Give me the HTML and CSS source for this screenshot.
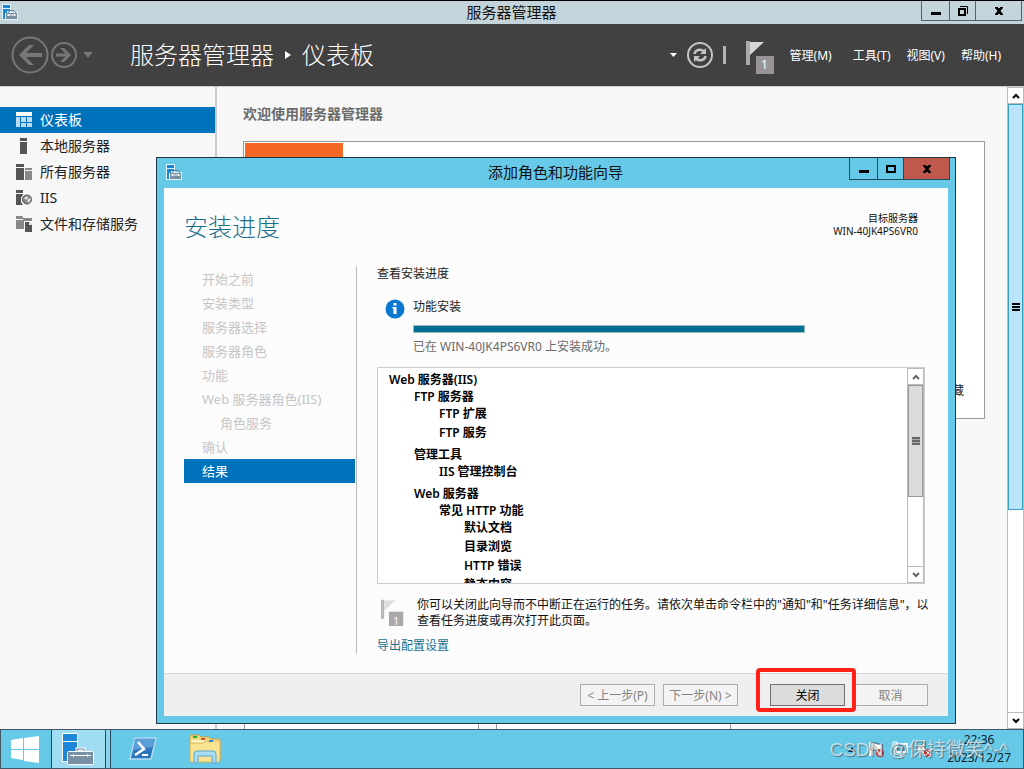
FILE: index.html
```html
<!DOCTYPE html>
<html lang="zh-CN">
<head>
<meta charset="utf-8">
<title>服务器管理器</title>
<link rel="stylesheet" href="styles.css">
</head>
<body>
<svg class="defs" width="0" height="0" aria-hidden="true">
  <symbol id="app-icon" viewBox="0 0 16 16">
    <path d="M0 0h9v8h7v8H0z" fill="#e4f2fa"/>
    <path d="M1 1h7v3H1zM1 5h7v2H5v2H3v6H1z" fill="#1c86d1"/>
    <path d="M6 9l2-2.500h4L14 9" fill="none" stroke="#6f8499"/>
    <path d="M4 9h11v6H4z" fill="#7890a5"/>
    <path d="M5 11h9M6.500 10v2M12.500 10v2" stroke="#fff"/>
  </symbol>
  <symbol id="min" viewBox="0 0 12 12"><path d="M1 7h10v3H1z"/></symbol>
  <symbol id="close" viewBox="0 0 12 12"><path d="M2 2h3v1h2V2h3v1L7.500 6 10 9v1H7V9H5v1H2V9l2.500-3L2 3z"/></symbol>
  <symbol id="up" viewBox="0 0 10 10"><path d="M2 7l3-3 3 3" fill="none" stroke="currentColor" stroke-width="2"/></symbol>
  <symbol id="down" viewBox="0 0 10 10"><path d="M2 3l3 3 3-3" fill="none" stroke="currentColor" stroke-width="2"/></symbol>
  <symbol id="flag" viewBox="0 0 29 34"><path d="M0 1h4v24H0z" fill="#a9a9a9"/><path d="M4 2h14L4 15z" fill="#d6d6d6"/><path d="M10 16h18v18H10z" fill="#979397"/></symbol>
</svg>
<div class="desktop">
  <header class="titlebar">
    <svg class="app-icon" width="16" height="16"><use href="#app-icon"/></svg>
    <h1 class="titlebar-text">服务器管理器</h1>
    <div class="winbtns">
      <button class="winbtn" aria-label="最小化"><svg width="12" height="12"><use href="#min"/></svg></button>
      <button class="winbtn winbtn-mid" aria-label="还原"><svg width="12" height="12" viewBox="0 0 12 12"><path d="M2 4h6v6H2z" fill="none" stroke="#000" stroke-width="2"/><path d="M3 1.500h7.500V9" fill="none" stroke="#000"/></svg></button>
      <button class="winbtn winbtn-wide" aria-label="关闭"><svg width="12" height="12"><use href="#close"/></svg></button>
    </div>
  </header>

  <nav class="toolbar">
    <button class="plain" aria-label="后退"><svg width="38" height="38" viewBox="0 0 38 38" fill="none" stroke="#777" stroke-width="2"><circle cx="19" cy="19" r="17.500"/><path d="M31 19H10" stroke-width="4"/><path d="M18 9L8 19l10 10h5L13 19 23 9z" fill="#777" stroke="none"/></svg></button>
    <button class="plain fwd" aria-label="前进"><svg width="26" height="26" viewBox="0 0 26 26" fill="none" stroke="#777" stroke-width="2"><circle cx="13" cy="13" r="12"/><path d="M5 13h13" stroke-width="3"/><path d="M13 6l7 7-7 7h-4l7-7-7-7z" fill="#777" stroke="none"/></svg></button>
    <button class="plain hist" aria-label="历史记录"><svg width="10" height="6" viewBox="0 0 10 6"><path d="M0 0h10L5 6z" fill="#777"/></svg></button>
    <div class="crumbs"><span>服务器管理器</span><svg width="6" height="8" viewBox="0 0 6 8"><path d="M0 0l6 4-6 4z" fill="#fff"/></svg><span>仪表板</span></div>
    <div class="tools">
      <svg width="7" height="4" viewBox="0 0 7 4"><path d="M0 0h7L3.500 4z" fill="#fff"/></svg>
      <button class="plain refresh" aria-label="刷新"><svg width="26" height="26" viewBox="0 0 26 26" fill="none" stroke="#c4c4c4" stroke-width="2"><circle cx="13" cy="13" r="12"/><path d="M7.500 12c.5-4 6-6 9.500-2.500M18.500 14c-.5 4-6 6-9.500 2.500" stroke-width="2.500"/><path d="M19 6v6h-6zM7 20v-6h6z" fill="#c4c4c4" stroke="none"/></svg></button>
      <span class="bar"></span>
      <button class="plain notify" aria-label="通知"><svg width="29" height="34"><use href="#flag"/></svg><span class="count">1</span></button>
      <ul class="menu"><li><button class="plain">管理(M)</button></li><li><button class="plain">工具(T)</button></li><li><button class="plain">视图(V)</button></li><li><button class="plain">帮助(H)</button></li></ul>
    </div>
  </nav>

  <div class="body">
    <aside class="side">
      <a class="side-item active" href="#"><svg width="16" height="16" viewBox="0 0 16 16"><path d="M0 0h16v4H0z" fill="#fff"/><path d="M0 5h4v10H0zM5 5h5v5H5zM11 5h5v5h-5zM5 11h5v4H5zM11 11h5v4h-5z" fill="#b9dcf2"/></svg>仪表板</a>
      <a class="side-item" href="#"><svg width="16" height="16" viewBox="0 0 16 16"><path d="M4 0h7v3H4zM4 4h7v12H4z" fill="#555"/></svg>本地服务器</a>
      <a class="side-item" href="#"><svg width="16" height="16" viewBox="0 0 16 16"><path d="M0 0h8v3H0zM0 4h8v12H0z" fill="#555"/><path d="M9 4h7v2H9zM9 7h7v9H9z" fill="#888"/></svg>所有服务器</a>
      <a class="side-item" href="#"><svg width="16" height="16" viewBox="0 0 16 16"><path d="M0 0h7v3H0zM0 4h7v1L5 8v4l2 3H0z" fill="#555"/><circle cx="11" cy="9.500" r="4.500" fill="#888" stroke="#555"/><path d="M8 8l3-2 1 2-2 2zM11 11l2-3 2 1-2 4z" fill="#ddd"/></svg>IIS</a>
      <a class="side-item" href="#"><svg width="16" height="16" viewBox="0 0 16 16"><path d="M0 0h6l1 1v1h9v3H8v8H0V4h7V3H0z" fill="#888"/><path d="M9 6h4l3 3v7H9z" fill="#555"/><path d="M13 6v3h3z" fill="#eee"/></svg>文件和存储服务</a>
    </aside>
    <main class="content">
      <h2 class="welcome">欢迎使用服务器管理器</h2>
      <section class="panel"><div class="tile"></div><button class="plain hide">隐藏</button></section>
      <div class="cards"><div class="card"></div><div class="card"></div></div>
    </main>
    <div class="scroll scroll-main">
      <button class="sbtn" aria-label="向上"><svg width="10" height="10"><use href="#up"/></svg></button>
      <div class="thumb"><span class="grip"></span></div>
      <div class="track"></div>
      <button class="sbtn" aria-label="向下"><svg width="10" height="10"><use href="#down"/></svg></button>
    </div>
  </div>

  <footer class="taskbar">
    <button class="task start" aria-label="开始"><svg width="28" height="27" viewBox="0 0 28 27"><path d="M0 4l12-2v11H0zM13 2l15-2v13H13zM0 14h12v10L0 22zM13 14h15v13l-15-2z" fill="#fff"/></svg></button>
    <button class="task running" aria-label="服务器管理器"><svg width="32" height="32" viewBox="0 0 32 32"><path d="M.5.500h15v28H.5z" fill="#1c86d8" stroke="#fff"/><path d="M0 8.500h16" stroke="#fff"/><path d="M15 19v-3h7v3" fill="none" stroke="#fff" stroke-width="3"/><path d="M15 19v-3h7v3" fill="none" stroke="#6f8499"/><rect x="5.500" y="18.500" width="26" height="13" rx="1" fill="#7890a5" stroke="#fff"/><path d="M8 22.500h21M11.500 21v3M25.500 21v3" stroke="#fff"/></svg></button>
    <button class="task ps" aria-label="PowerShell"><svg width="28" height="24" viewBox="0 0 28 24"><path d="M6 1h21l-5 21H1z" fill="#2b76bd" stroke="#b5dcf3" stroke-width="1.500"/><path d="M6 2h20l-2 8L4 13z" fill="#5b9fd6"/><path d="M9 5l6 7-9 6" fill="none" stroke="#fff" stroke-width="2.500"/><path d="M13 18h6" stroke="#fff" stroke-width="2"/></svg></button>
    <button class="task files" aria-label="文件资源管理器"><svg width="32" height="30" viewBox="0 0 32 30"><path d="M1 2q0-1 1-1h8l2 2h8l2 2h8q1 0 1 1v20H1z" fill="#f1d67d" stroke="#c9a34a"/><path d="M2 6h28v3H2z" fill="#fff4c4"/><path d="M1 9h13l2-2h15v19q0 2-2 2H3q-2 0-2-2z" fill="#f8e391" stroke="#d8b65a"/><path d="M4 2h4v2H4z" fill="#2bae2b"/><path d="M12 4h4v2h-4z" fill="#d8542b"/><path d="M20 6h4v2h-4z" fill="#2d87c9"/><path d="M5 29V20q0-3 3-3h16q3 0 3 3v9h-4v-7H9v7z" fill="#a9dcf5" stroke="#5ca6cc"/></svg></button>
    <div class="tray">
      <svg width="8" height="5" viewBox="0 0 8 5"><path d="M0 5h8L4 0z" fill="#123"/></svg>
      <svg class="tray-icon" width="16" height="16" viewBox="0 0 16 16"><path d="M2 1v14" stroke="#fff" stroke-width="2"/><path d="M3 2h5l1 1h5v7H8L7 9H3z" fill="#fff" stroke="#456"/><circle cx="12" cy="12" r="4" fill="#d62f2f"/><path d="M10 10l4 4M14 10l-4 4" stroke="#fff"/></svg>
      <svg class="tray-icon" width="16" height="16" viewBox="0 0 16 16"><path d="M4 3h11v8H4z" fill="#479bc0" stroke="#fff" stroke-width="2"/><path d="M9 11v3M6 14.500h8M1 1h4v5H1zM3 6v8" fill="none" stroke="#fff"/></svg>
      <svg class="tray-icon" width="16" height="16" viewBox="0 0 16 16"><path d="M1 5h3l5-4v13l-5-4H1z" fill="#fff" stroke="#456"/><circle cx="12" cy="12" r="4" fill="#d62f2f"/><path d="M10 10l4 4M14 10l-4 4" stroke="#fff"/></svg>
      <div class="clock"><time>22:36</time><time>2023/12/27</time></div>
    </div>
    <span class="watermark">CSDN @保持微笑^-^</span>
  </footer>

  <section class="dialog" role="dialog" aria-labelledby="dlg-title">
    <div class="dlg-bar">
      <svg class="app-icon" width="16" height="16"><use href="#app-icon"/></svg>
      <h2 class="titlebar-text" id="dlg-title">添加角色和功能向导</h2>
      <div class="winbtns">
        <button class="winbtn" aria-label="最小化"><svg width="12" height="12"><use href="#min"/></svg></button>
        <button class="winbtn winbtn-mid" aria-label="最大化"><svg width="12" height="12" viewBox="0 0 12 12"><path d="M2 3h8v6H2z" fill="none" stroke="#000" stroke-width="2"/></svg></button>
        <button class="winbtn winbtn-wide danger" aria-label="关闭"><svg width="12" height="12"><use href="#close"/></svg></button>
      </div>
    </div>
    <div class="dlg-client">
      <div class="dlg-head">
        <h3 class="dlg-h">安装进度</h3>
        <p class="target">目标服务器<br>WIN-40JK4PS6VR0</p>
      </div>
      <div class="dlg-main">
        <ol class="steps">
          <li>开始之前</li><li>安装类型</li><li>服务器选择</li><li>服务器角色</li><li>功能</li><li>Web 服务器角色(IIS)</li><li class="sub">角色服务</li><li>确认</li><li class="current">结果</li>
        </ol>
        <div class="detail">
          <p>查看安装进度</p>
          <div class="progress-row">
            <svg width="20" height="20" viewBox="0 0 20 20"><circle cx="10" cy="10" r="9.500" fill="#0a78d0"/><path d="M8.500 4h3v2.500h-3zM7.500 8h4v7h-3V9.500h-1z" fill="#fff"/></svg>
            <div class="progress-col">
              <label for="prog">功能安装</label>
              <progress id="prog" value="100" max="100"></progress>
              <p class="status">已在 WIN-40JK4PS6VR0 上安装成功。</p>
            </div>
          </div>
          <div class="results">
            <ul class="tree">
              <li>Web 服务器(IIS)
                <ul>
                  <li>FTP 服务器<ul class="leaves"><li>FTP 扩展</li><li>FTP 服务</li></ul></li>
                  <li>管理工具<ul class="leaves"><li>IIS 管理控制台</li></ul></li>
                  <li>Web 服务器<ul><li>常见 HTTP 功能<ul class="leaves"><li>默认文档</li><li>目录浏览</li><li>HTTP 错误</li><li>静态内容</li></ul></li></ul></li>
                </ul>
              </li>
            </ul>
            <div class="scroll scroll-list">
              <button class="sbtn" aria-label="向上"><svg width="10" height="10"><use href="#up"/></svg></button>
              <div class="thumb"><span class="grip"></span></div>
              <div class="track"></div>
              <button class="sbtn" aria-label="向下"><svg width="10" height="10"><use href="#down"/></svg></button>
            </div>
          </div>
          <div class="note">
            <div class="note-flag"><svg width="23" height="27"><use href="#flag"/></svg><span class="count">1</span></div>
            <p>你可以关闭此向导而不中断正在运行的任务。请依次单击命令栏中的"通知"和"任务详细信息"，以查看任务进度或再次打开此页面。</p>
          </div>
          <a class="export" href="#">导出配置设置</a>
        </div>
      </div>
      <div class="dlg-foot">
        <button class="btn" disabled>&lt; 上一步(P)</button>
        <button class="btn" disabled>下一步(N) &gt;</button>
        <div class="close-wrap"><button class="btn primary">关闭</button></div>
        <button class="btn" disabled>取消</button>
      </div>
    </div>
  </section>
</div>
</body>
</html>
```
FILE: styles.css
```css
* { box-sizing: border-box; }
body, h1, h2, h3, p, ul, ol { margin: 0; padding: 0; }
ul, ol { list-style: none; }
body, button { font-family: "Noto Sans", "Noto Sans CJK SC", sans-serif; font-size: 12px; line-height: 16px; }
svg { display: block; flex: none; }
.defs { position: absolute; }
a { text-decoration: none; }
.plain { border: 0; padding: 0; background: none; color: inherit; }

.desktop { position: relative; display: flex; flex-direction: column; height: 100vh; overflow: hidden; background: #f7f7f7; color: #222; }

.titlebar { display: flex; flex: none; height: 24px; padding: 0 2px; border-top: 1px solid #000; background: #c3d5db; }
.app-icon { margin-top: 3px; }
.titlebar-text { flex: 1; padding-left: 84px; font-size: 15px; font-weight: 400; line-height: 23px; text-align: center; color: #111; }
.winbtns { display: flex; flex: none; height: 20px; border: 1px solid #52636b; border-top: 0; }
.winbtn { display: flex; align-items: center; justify-content: center; width: 27px; border: 0; padding: 0; background: none; }
.winbtn + .winbtn { border-left: 1px solid #52636b; }
.winbtn-mid { width: 26px; }
.winbtn-wide { width: 46px; }

.toolbar { display: flex; flex: none; align-items: center; height: 62px; padding: 0 23px 0 11px; background: #414141; color: #fff; }
.fwd { margin-left: 2px; }
.hist { margin: 0 37px 0 6px; }
.crumbs { display: flex; align-items: center; gap: 11px; font-size: 24px; line-height: 32px; font-weight: 300; white-space: nowrap; }
.tools { display: flex; align-items: center; margin-left: auto; }
.refresh { margin-left: 10px; }
.bar { width: 3px; height: 18px; margin: 0 20px 0 10px; background: #b5b5b5; }
.notify { position: relative; margin-top: 4px; }
.count { position: absolute; right: 1px; bottom: 0; width: 18px; line-height: 18px; text-align: center; color: #fff; }
.menu { display: flex; gap: 16px; margin-left: 15px; padding-top: 2px; }
.menu li:nth-child(2) { margin-left: 5px; }

.body { display: flex; flex: 1; min-height: 0; border-top: 1px solid #ccc; }
.side { flex: none; width: 217px; padding-top: 20px; border-right: 2px solid #ccc; }
.side-item { display: flex; align-items: center; gap: 8px; height: 26px; padding-left: 16px; font-size: 14px; color: #222; }
.side-item.active { background: #0072bc; color: #fff; }
.content { display: flex; flex: 1; flex-direction: column; min-width: 0; padding: 17px 22px 0 26px; overflow: hidden; }
.welcome { font-size: 14px; line-height: 20px; color: #6b6b6b; }
.panel { display: flex; flex: none; align-items: flex-end; justify-content: space-between; height: 278px; margin-top: 17px; padding: 1px 20px 19px 1px; border: 1px solid #999; background: #fff; }
.tile { align-self: flex-start; width: 98px; height: 98px; background: #f56723; }
.cards { display: grid; flex: 1; grid-template-columns: 235px 235px; gap: 17px; margin-top: 60px; padding-left: 1px; }
.card { border: solid #999; border-width: 1px 1px 0; background: #fff; }

.scroll { display: flex; flex: none; flex-direction: column; width: 17px; background: #fff; border: solid #bbb; border-width: 0 1px; }
.sbtn { display: flex; flex: none; align-items: center; justify-content: center; height: 17px; border: solid #bbb; border-width: 1px 0; padding: 0; background: #fff; color: #000; }
.thumb { display: flex; align-items: center; justify-content: center; border: 1px solid #3a9fb8; background: #b9e4fb; }
.grip { width: 8px; height: 8px; background: repeating-linear-gradient(#000 0 2px, transparent 2px 3px); }
.scroll-main .thumb { flex: 406; }
.scroll-main .track { flex: 203; }
.scroll-list .sbtn { color: #666; }
.scroll-list .thumb { flex: 111; border-color: #999; background: #dcdcdc; }
.scroll-list .thumb .grip { background: repeating-linear-gradient(#666 0 2px, #aaa 2px 3px); }
.scroll-list .track { flex: 70; }

.taskbar { position: relative; display: flex; flex: none; height: 40px; border: 1px solid #456; background: #66c9e8; }
.task { display: flex; align-items: center; border: 0; padding: 0; background: none; }
.start { width: 50px; padding-left: 10px; }
.running { width: 60px; padding-left: 10px; border: solid #234a5a; border-width: 0 1px; background: linear-gradient(90deg, #a0dcf2 53px, #234a5a 53px 54px, #8ad4ee 54px); }
.ps { margin-left: 18px; }
.files { margin-left: 32px; }
.tray { display: flex; align-items: center; margin-left: auto; padding-right: 12px; }
.tray-icon { margin-left: 8px; }
.tray svg:first-child { margin-right: 4px; }
.clock { display: flex; flex-direction: column; align-items: center; margin-left: 15px; line-height: 18px; color: #123; }
.watermark { position: absolute; right: 15px; top: 7px; font-family: "Liberation Sans", "Noto Sans CJK SC", sans-serif; font-size: 19px; line-height: 26px; color: rgba(225, 235, 240, .8); text-shadow: 1px 1px 1px rgba(60, 80, 90, .7); white-space: nowrap; }

.dialog { position: absolute; top: 157px; right: 68px; bottom: 45px; left: 156px; display: flex; flex-direction: column; padding: 0 7px 7px; border: 1px solid #1d3540; background: #66c9e8; }
.dlg-bar { display: flex; flex: none; height: 30px; margin-right: -2px; padding-left: 2px; }
.dlg-bar .app-icon { margin-top: 6px; }
.dlg-bar .titlebar-text { padding-left: 80px; line-height: 29px; }
.dlg-bar .winbtns { height: 22px; border-color: #234a5a; }
.dlg-bar .winbtn + .winbtn { border-color: #234a5a; }
.danger { background: #c1584d; }
.dlg-client { display: flex; flex: 1; flex-direction: column; min-height: 0; background: #fcfcfc; }
.dlg-head { display: flex; justify-content: space-between; padding: 23px 30px 0 20px; }
.dlg-h { font-size: 24px; font-weight: 300; line-height: 32px; color: #1b6f8e; }
.target { padding-top: 1px; font-size: 10px; line-height: 13px; text-align: right; color: #111; }
.dlg-main { display: flex; flex: 1; min-height: 0; padding: 23px 20px 19px; }
.steps { flex: none; width: 173px; padding: 1px 1px 0 0; border-right: 1px solid #bbb; font-size: 13px; line-height: 24px; color: #c6c6c6; }
.steps li { padding-left: 18px; }
.steps .sub { padding-left: 36px; }
.steps .current { background: #0072bc; color: #fff; }
.detail { display: flex; flex: 1; flex-direction: column; min-width: 0; padding-left: 20px; }
.progress-row { display: flex; gap: 8px; margin-top: 17px; padding-left: 8px; }
.progress-col { display: flex; flex-direction: column; flex: 1; padding-right: 123px; }
progress { appearance: none; width: 100%; height: 8px; margin: 10px 0 6px; border: 1px solid #9bb; background: #ddd; }
progress::-webkit-progress-bar { background: #ddd; }
progress::-webkit-progress-value { background: #006f94; }
.status { color: #6b6b6b; }
.results { display: flex; flex: 1; min-height: 0; margin: 12px 3px 0 0; border: 1px solid #ccc; background: #fff; overflow: hidden; }
.tree { flex: 1; padding: 3px 0 0 11px; font-weight: 600; line-height: 17px; color: #000; }
.tree ul { padding-left: 25px; }
.tree ul > li + li { margin-top: 4px; }
.tree .leaves { line-height: 18px; }
.tree .leaves > li + li { margin-top: 1px; }
.note { display: flex; flex: none; gap: 13px; margin: 13px -10px 0 0; padding-left: 4px; color: #111; }
.note-flag { position: relative; flex: none; margin-top: 2px; opacity: .8; }
.note-flag .count { width: 14px; line-height: 15px; font-size: 10px; }
.export { margin-top: 9px; color: #1b6f8e; }
.dlg-foot { display: flex; flex: none; align-items: flex-start; gap: 8px; justify-content: flex-end; height: 43px; padding: 10px 20px 0; border-top: 1px solid #d8d8d8; background: #efefef; }
.btn { display: block; width: 75px; height: 22px; border: 1px solid #acacac; padding: 1px 0 0; background: #f3f3f3; color: #838383; white-space: nowrap; }
.btn.primary { border-color: #707070; background: #dcdcdc; color: #000; }
.close-wrap { position: relative; z-index: 1; margin-left: 24px; }
.close-wrap::after { content: ""; position: absolute; inset: -16px -11px -6px -14px; border: 4px solid #ff2116; border-radius: 4px; pointer-events: none; }
```
